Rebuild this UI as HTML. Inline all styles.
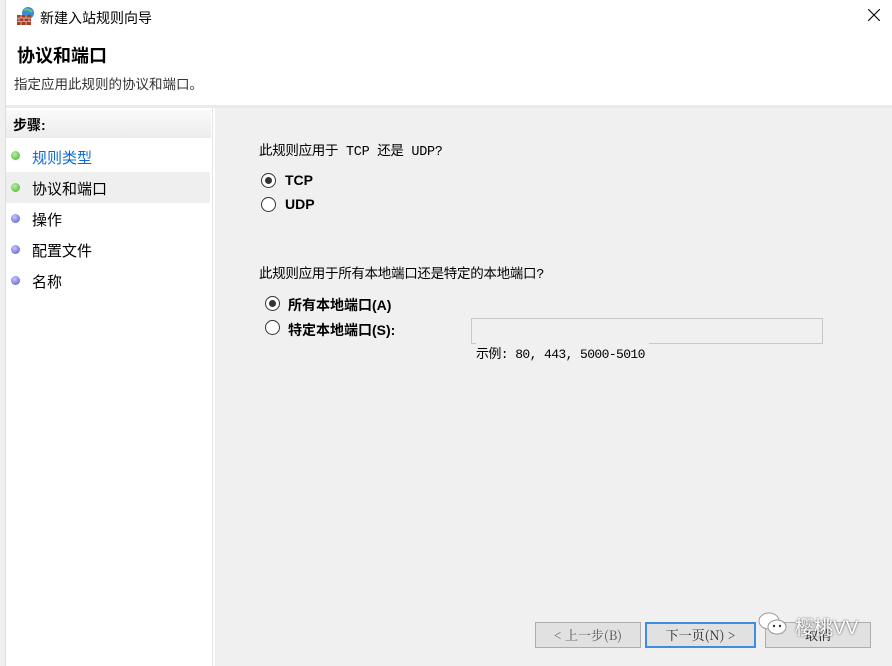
<!DOCTYPE html>
<html><head><meta charset="utf-8"><style>
*{margin:0;padding:0;box-sizing:border-box}
body{width:892px;height:666px;overflow:hidden;background:#fff;font-family:"Liberation Sans","Microsoft YaHei","Noto Sans CJK SC",sans-serif;position:relative;color:#000}
.abs{position:absolute;white-space:nowrap}
.leftedge{left:0;top:0;width:6px;height:666px;background:#f0f0f0;border-right:1px solid #ddd}
.dot{position:absolute;width:9px;height:9px;border-radius:50%}
.g{background:radial-gradient(circle at 40% 35%,#b8f0a0,#3cb030)}
.b{background:radial-gradient(circle at 40% 35%,#c8c8ff,#5050c8)}
.radio{position:absolute;width:15px;height:15px;border:1px solid #333;border-radius:50%;background:#fff}
.radio.on::after{content:"";position:absolute;left:3px;top:3px;width:7px;height:7px;border-radius:50%;background:#333}
.btn{position:absolute;height:26px;background:#e1e1e1;border:1px solid #adadad;font-size:13px;color:#555;text-align:center;line-height:24px;font-family:"Noto Serif CJK SC",serif}
.mono{font-family:"Liberation Mono","Noto Sans CJK SC",monospace}
</style></head><body>
<div class="abs leftedge"></div>
<svg class="abs" style="left:16px;top:6px" width="20" height="20" viewBox="0 0 20 20"><circle cx="12" cy="7" r="6" fill="#3a8ad8"/><path d="M8 4q4-2 8 2" stroke="#6c6" stroke-width="2" fill="none"/><rect x="1" y="9" width="14" height="10" fill="#a0402a"/><path d="M1 12h14M1 15.5h14M5 9v3M10 9v3M3 12v3.5M8 12v3.5M13 12v3.5M5 15.5v3.5M10 15.5v3.5" stroke="#e8c0a8" stroke-width=".8"/></svg>
<div class="abs" style="left:40px;top:8px;font-size:14px">新建入站规则向导</div>
<svg class="abs" style="left:868px;top:9px" width="12" height="12"><path d="M0 0L12 12M12 0L0 12" stroke="#000" stroke-width="1.1"/></svg>
<div class="abs" style="left:17px;top:42px;font-size:18px;font-weight:bold">协议和端口</div>
<div class="abs" style="left:14px;top:73px;font-size:13.5px;color:#333">指定应用此规则的协议和端口。</div>
<div class="abs" style="left:6px;top:105px;width:886px;height:3px;background:#eaeaea"></div>
<div class="abs" style="left:6px;top:108px;width:207px;height:558px;background:#fff;border-right:1px solid #e4e4e4"></div>
<div class="abs" style="left:6px;top:110px;width:205px;height:28px;background:linear-gradient(#fafafa,#ececec)"></div>
<div class="abs" style="left:13px;top:115px;font-size:14px;font-weight:bold">步骤:</div>
<div class="abs" style="left:6px;top:172px;width:204px;height:31px;background:#efefef"></div>
<div class="dot g" style="left:11px;top:151px"></div><div class="abs" style="left:32px;top:147px;font-size:15px;color:#0b6cd6">规则类型</div>
<div class="dot g" style="left:11px;top:183px"></div><div class="abs" style="left:32px;top:178px;font-size:15px">协议和端口</div>
<div class="dot b" style="left:11px;top:214px"></div><div class="abs" style="left:32px;top:209px;font-size:15px">操作</div>
<div class="dot b" style="left:11px;top:245px"></div><div class="abs" style="left:32px;top:240px;font-size:15px">配置文件</div>
<div class="dot b" style="left:11px;top:276px"></div><div class="abs" style="left:32px;top:271px;font-size:15px">名称</div>
<div class="abs" style="left:215px;top:108px;width:677px;height:558px;background:#f0f0f0"></div>
<div class="abs mono" style="left:259px;top:139px;font-size:13.5px;letter-spacing:-0.3px">此规则应用于 TCP 还是 UDP?</div>
<div class="radio on" style="left:261px;top:173px"></div><div class="abs" style="left:285px;top:172px;font-size:14px;font-weight:bold">TCP</div>
<div class="radio" style="left:261px;top:197px"></div><div class="abs" style="left:285px;top:196px;font-size:14px;font-weight:bold">UDP</div>
<div class="abs mono" style="left:259px;top:262px;font-size:13.5px;letter-spacing:-0.3px">此规则应用于所有本地端口还是特定的本地端口?</div>
<div class="radio on" style="left:265px;top:296px"></div><div class="abs" style="left:288px;top:295px;font-size:14px;font-weight:bold">所有本地端口(A)</div>
<div class="radio" style="left:265px;top:320px"></div><div class="abs" style="left:288px;top:320px;font-size:14px;font-weight:bold">特定本地端口(S):</div>
<div class="abs" style="left:471px;top:318px;width:352px;height:26px;background:#f0f0f0;border:1px solid #c8c8c8"></div>
<div class="abs mono" style="left:476px;top:343px;font-size:13px;background:#f0f0f0;padding-right:4px;letter-spacing:-0.6px">示例: 80, 443, 5000-5010</div>
<div class="btn" style="left:535px;top:622px;width:106px">&lt; 上一步(B)</div>
<div class="btn" style="left:645px;top:622px;width:111px;border:2px solid #3c8ee0;color:#222;line-height:22px">下一页(N) &gt;</div>
<div class="btn" style="left:765px;top:622px;width:106px;color:#222">取消</div>
<svg class="abs" style="left:758px;top:610px" width="30" height="28"><ellipse cx="11" cy="11" rx="10" ry="8" fill="#fff" stroke="#999"/><ellipse cx="19" cy="17" rx="9" ry="7" fill="#fff" stroke="#999"/><circle cx="16" cy="16" r="1.2" fill="#333"/><circle cx="22" cy="16" r="1.2" fill="#333"/></svg>
<div class="abs" style="left:795px;top:613px;font-size:19px;color:#fff;text-shadow:0 0 2px #444">樱桃VV</div>
</body></html>
